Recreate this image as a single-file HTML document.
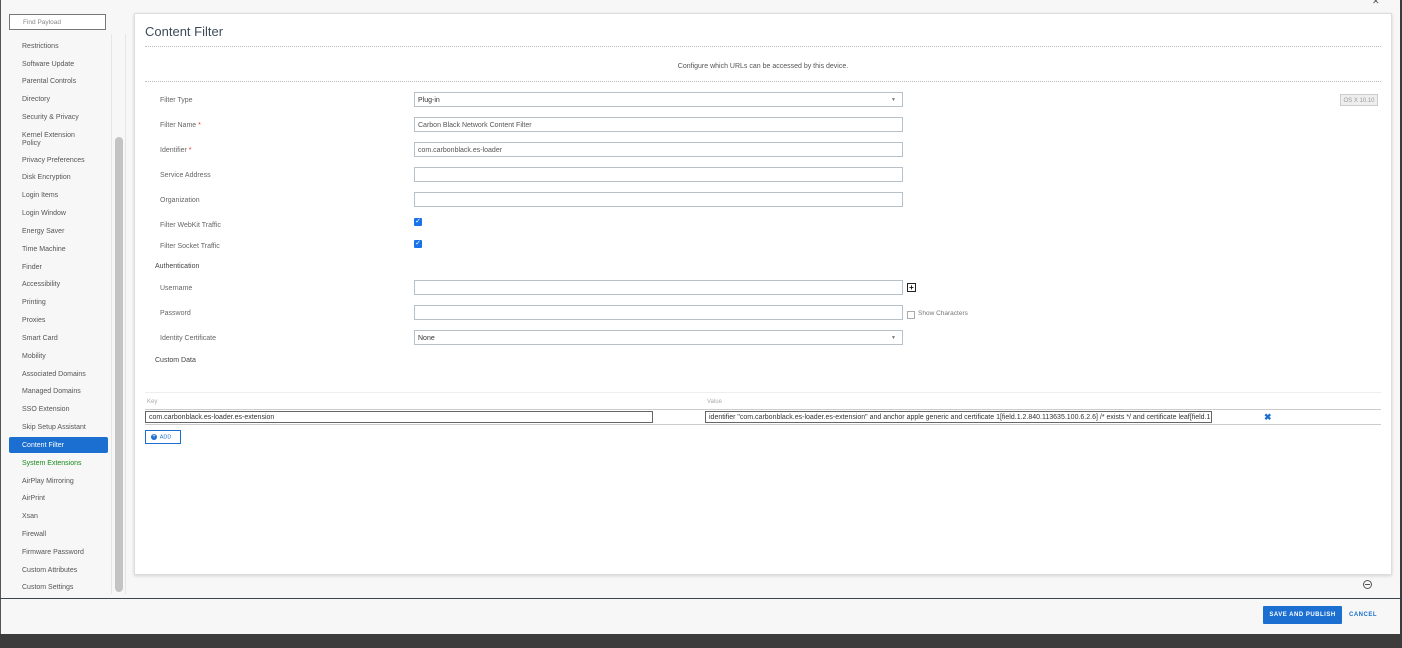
<!DOCTYPE html>
<html><head><meta charset="utf-8"><style>
*{box-sizing:border-box;margin:0;padding:0}
body{width:1402px;height:648px;background:#3c3c3c;font-family:"Liberation Sans",sans-serif;font-size:7px;color:#666;position:relative;overflow:hidden}
.a{position:absolute}
#win{left:0;top:0;width:1400px;height:634px;background:#f7f7f7;border-left:1px solid #555}
.si{position:absolute;left:22px;font-size:7px;color:#555;line-height:8px}
.lbl{position:absolute;left:160px;font-size:7px;color:#666}
.inp{position:absolute;left:414px;width:489px;height:15px;border:1px solid #b5c0c8;background:#fff;font-size:7px;color:#555;padding:4px 0 0 3px}
.cb{position:absolute;left:414px;width:8px;height:8px;background:#1a73e8;border-radius:1px;color:#fff;font-size:7px;line-height:8px;text-align:center}
.dot{position:absolute;left:145px;width:1236px;border-top:1px dotted #bbb}
</style></head><body>
<div id="win" class="a"></div>
<div class="a" style="left:9px;top:14px;width:97px;height:16px;border:1px solid #777;background:#fff;font-size:6.5px;color:#888;padding:4px 0 0 13px">Find Payload</div>
<div class="a" style="left:111px;top:34px;width:1px;height:560px;background:#e6e6e6"></div>
<div class="a" style="left:125px;top:34px;width:1px;height:560px;background:#e6e6e6"></div>
<div class="a" style="left:115px;top:137px;width:8px;height:455px;background:#c4c4c4;border-radius:4px"></div>
<div class="a" style="left:9px;top:437px;width:99px;height:16px;background:#1a6fd0;border-radius:2px"></div>
<div class="si" style="top:43px">Restrictions</div>
<div class="si" style="top:61px">Software Update</div>
<div class="si" style="top:78px">Parental Controls</div>
<div class="si" style="top:96px">Directory</div>
<div class="si" style="top:114px">Security &amp; Privacy</div>
<div class="si" style="top:132px">Kernel Extension<br>Policy</div>
<div class="si" style="top:157px">Privacy Preferences</div>
<div class="si" style="top:174px">Disk Encryption</div>
<div class="si" style="top:192px">Login Items</div>
<div class="si" style="top:210px">Login Window</div>
<div class="si" style="top:228px">Energy Saver</div>
<div class="si" style="top:246px">Time Machine</div>
<div class="si" style="top:264px">Finder</div>
<div class="si" style="top:281px">Accessibility</div>
<div class="si" style="top:299px">Printing</div>
<div class="si" style="top:317px">Proxies</div>
<div class="si" style="top:335px">Smart Card</div>
<div class="si" style="top:353px">Mobility</div>
<div class="si" style="top:371px">Associated Domains</div>
<div class="si" style="top:388px">Managed Domains</div>
<div class="si" style="top:406px">SSO Extension</div>
<div class="si" style="top:424px">Skip Setup Assistant</div>
<div class="si" style="top:442px;color:#fff">Content Filter</div>
<div class="si" style="top:460px;color:#1a8a1a">System Extensions</div>
<div class="si" style="top:478px">AirPlay Mirroring</div>
<div class="si" style="top:495px">AirPrint</div>
<div class="si" style="top:513px">Xsan</div>
<div class="si" style="top:531px">Firewall</div>
<div class="si" style="top:549px">Firmware Password</div>
<div class="si" style="top:567px">Custom Attributes</div>
<div class="si" style="top:584px">Custom Settings</div>

<div class="a" style="left:134px;top:13px;width:1258px;height:562px;background:#fff;border:1px solid #ddd;box-shadow:0 1px 3px rgba(0,0,0,.15)"></div>
<div class="a" style="left:145px;top:24px;font-size:13px;color:#3d4b5a">Content Filter</div>
<div class="dot" style="top:46px"></div>
<div class="a" style="left:0;width:1526px;top:63px;text-align:center;font-size:7px;color:#555">Configure which URLs can be accessed by this device.</div>
<div class="dot" style="top:81px"></div>

<div class="lbl" style="top:97px">Filter Type</div>
<div class="inp" style="top:92px;color:#333">Plug-in<span style="position:absolute;right:6px;top:4px;font-size:5px;color:#777">▼</span></div>
<div class="a" style="left:1340px;top:94px;width:38px;height:12px;border:1px solid #ccc;background:#eee;font-size:6px;color:#999;text-align:center;padding-top:3px">OS X 10.10</div>
<div class="lbl" style="top:122px">Filter Name <span style="color:#d33">*</span></div>
<div class="inp" style="top:117px">Carbon Black Network Content Filter</div>
<div class="lbl" style="top:147px">Identifier <span style="color:#d33">*</span></div>
<div class="inp" style="top:142px">com.carbonblack.es-loader</div>
<div class="lbl" style="top:172px">Service Address</div>
<div class="inp" style="top:167px"></div>
<div class="lbl" style="top:197px">Organization</div>
<div class="inp" style="top:192px"></div>
<div class="lbl" style="top:222px">Filter WebKit Traffic</div>
<div class="cb" style="top:218px">✓</div>
<div class="lbl" style="top:243px">Filter Socket Traffic</div>
<div class="cb" style="top:240px">✓</div>
<div class="a" style="left:155px;top:263px;font-size:7px;color:#444">Authentication</div>
<div class="lbl" style="top:285px">Username</div>
<div class="inp" style="top:280px"></div>
<div class="a" style="left:907px;top:283px;width:9px;height:9px;border:1px solid #222;font-size:8px;line-height:7px;text-align:center;color:#111;font-weight:bold">+</div>
<div class="lbl" style="top:310px">Password</div>
<div class="inp" style="top:305px"></div>
<div class="a" style="left:907px;top:311px;width:8px;height:8px;border:1px solid #aaa"></div>
<div class="a" style="left:918px;top:310px;font-size:6.5px;color:#777">Show Characters</div>
<div class="lbl" style="top:335px">Identity Certificate</div>
<div class="inp" style="top:330px;color:#333">None<span style="position:absolute;right:6px;top:4px;font-size:5px;color:#777">▼</span></div>
<div class="a" style="left:155px;top:357px;font-size:7px;color:#444">Custom Data</div>

<div class="a" style="left:145px;top:392px;width:1236px;border-top:1px solid #eee"></div>
<div class="a" style="left:147px;top:399px;font-size:6px;color:#aaa">Key</div>
<div class="a" style="left:707px;top:399px;font-size:6px;color:#aaa">Value</div>
<div class="a" style="left:145px;top:409px;width:1236px;border-top:1px solid #ccc"></div>
<div class="a" style="left:145px;top:424px;width:1236px;border-top:1px solid #ccc"></div>
<div class="a" style="left:145px;top:411px;width:508px;height:12px;border:1px solid #666;font-size:7px;color:#333;padding:2px 0 0 3px">com.carbonblack.es-loader.es-extension</div>
<div class="a" style="left:705px;top:411px;width:507px;height:12px;border:1px solid #666;font-size:7px;color:#333;padding:2px 0 0 3px;white-space:nowrap;overflow:hidden">identifier "com.carbonblack.es-loader.es-extension" and anchor apple generic and certificate 1[field.1.2.840.113635.100.6.2.6] /* exists */ and certificate leaf[field.1.2.8</div>
<div class="a" style="left:1264px;top:412px;font-size:9px;color:#1a6fd0;font-weight:bold">✖</div>
<div class="a" style="left:145px;top:430px;width:36px;height:14px;border:1px solid #1a6fd0;font-size:5.5px;color:#1a6fd0;padding:3px 0 0 5px"><span style="display:inline-block;width:6px;height:6px;border-radius:3px;background:#1a6fd0;color:#fff;font-size:6px;line-height:6px;text-align:center;vertical-align:middle">+</span>&nbsp; ADD</div>

<div class="a" style="left:1363px;top:580px;width:9px;height:9px;border:1px solid #555;border-radius:5px"></div>
<div class="a" style="left:1365px;top:584px;width:5px;height:1px;background:#555"></div>
<div class="a" style="left:0;top:598px;width:1400px;height:1px;background:#3d4550"></div>
<div class="a" style="left:1263px;top:606px;width:79px;height:18px;background:#1a6fd0;border-radius:1px;color:#fff;font-size:6px;font-weight:bold;letter-spacing:.5px;text-align:center;padding-top:6px">SAVE AND PUBLISH</div>
<div class="a" style="left:1349px;top:612px;font-size:6px;font-weight:bold;letter-spacing:.5px;color:#1a6fd0">CANCEL</div>
<div class="a" style="left:1372px;top:-4px;font-size:9px;color:#555">✕</div>
</body></html>
